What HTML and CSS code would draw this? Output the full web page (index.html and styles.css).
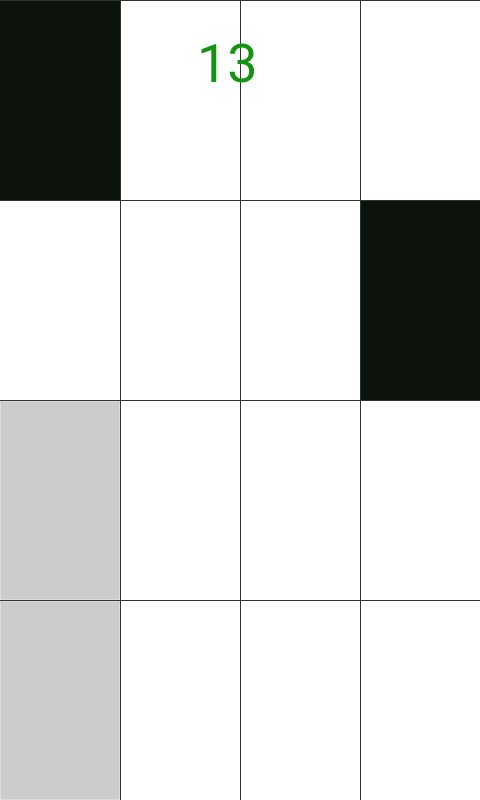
FILE: index.html
```html
<!DOCTYPE html>
<html>
<head>
<meta charset="utf-8">
<link rel="stylesheet" href="styles.css">
</head>
<body>
<div class="board">
  <div class="row">
    <div class="cell black"></div><div class="cell"></div><div class="cell"></div><div class="cell"></div>
  </div>
  <div class="row">
    <div class="cell"></div><div class="cell"></div><div class="cell"></div><div class="cell black"></div>
  </div>
  <div class="row">
    <div class="cell grey"></div><div class="cell"></div><div class="cell"></div><div class="cell"></div>
  </div>
  <div class="row">
    <div class="cell grey"></div><div class="cell"></div><div class="cell"></div><div class="cell"></div>
  </div>
  <div class="score">13</div>
</div>
</body>
</html>
```
FILE: styles.css
```css
html, body {
  margin: 0;
  padding: 0;
  background: #ffffff;
}
.board {
  position: relative;
  width: 480px;
  height: 800px;
  overflow: hidden;
}
.row {
  display: flex;
  height: 200px;
  box-sizing: border-box;
  border-top: 1px solid #333333;
}
.cell {
  width: 120px;
  height: 100%;
  box-sizing: border-box;
  background: #ffffff;
}
.cell + .cell {
  border-left: 1px solid #333333;
}
.black {
  background: #0c120c;
}
.grey {
  background: #cccccc;
  box-shadow: inset 0 0 0 1px #dcdcdc;
}
.score {
  position: absolute;
  left: 197px;
  top: 32px;
  font-family: Roboto, "Liberation Sans", sans-serif;
  font-size: 54px;
  line-height: 64px;
  color: #129612;
}
```
